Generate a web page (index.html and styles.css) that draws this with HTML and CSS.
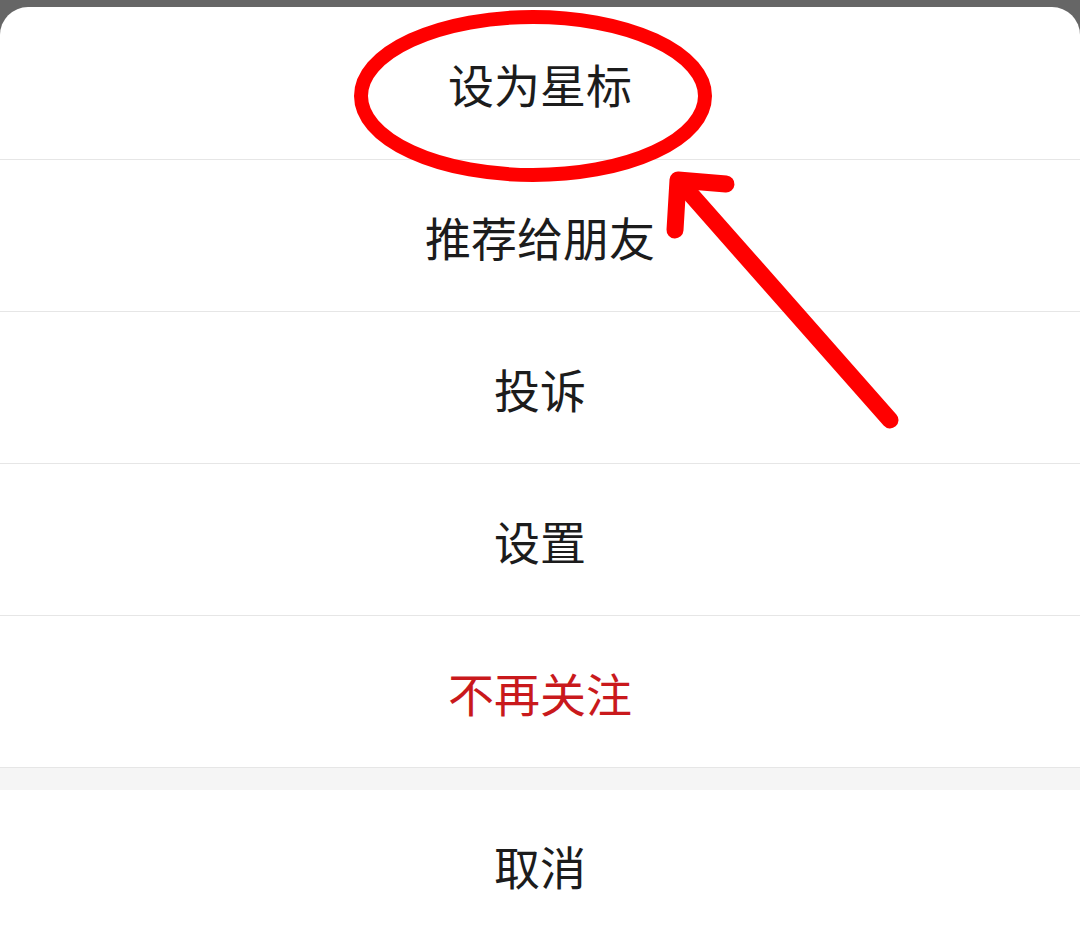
FILE: index.html
```html
<!DOCTYPE html>
<html lang="zh-CN">
<head>
    <meta charset="UTF-8">
    <meta name="viewport" content="width=device-width, initial-scale=1.0">
    <title>操作菜单</title>
    <link rel="stylesheet" href="styles.css">
</head>
<body>
    <div class="sheet">
        <div class="menu">
            <div class="item">设为星标</div>
            <div class="item">推荐给朋友</div>
            <div class="item">投诉</div>
            <div class="item">设置</div>
            <div class="item danger">不再关注</div>
        </div>
        <div class="spacer"></div>
        <div class="item cancel">取消</div>
    </div>

    <!-- red markup drawn over the screenshot -->
    <svg class="markup" width="1080" height="936" viewBox="0 0 1080 936">
        <ellipse cx="533" cy="96" rx="172" ry="79" fill="none" stroke="#ff0000" stroke-width="14"/>
        <g fill="none" stroke="#ff0000" stroke-width="17" stroke-linecap="round" stroke-linejoin="round">
            <line x1="890" y1="420" x2="680" y2="182"/>
            <polyline points="726,184 678,180 675,230"/>
        </g>
    </svg>
</body>
</html>
```

FILE: styles.css
```css
body {
    margin: 0;
    background-color: #666;
    font-family: "Noto Sans CJK SC", "Noto Sans", sans-serif;
    position: relative;
    height: 936px;
    overflow: hidden;
}

.sheet {
    margin-top: 7px;
    background-color: #fff;
    border-radius: 28px 28px 0 0;
    height: 929px;
    overflow: hidden;
}

.item {
    height: 152px;
    display: flex;
    justify-content: center;
    align-items: center;
    font-size: 46px;
    color: #1c1c1c;
    border-bottom: 1px solid #e6e6e6;
    box-sizing: border-box;
}

.menu .item:first-child {
    height: 153px;
}

.item.danger {
    color: #c9191c;
}

.spacer {
    height: 22px;
    background-color: #f5f5f5;
}

.item.cancel {
    border-bottom: none;
    height: 146px;
    padding-top: 4px;
}

.markup {
    position: absolute;
    left: 0;
    top: 0;
    pointer-events: none;
}
```
